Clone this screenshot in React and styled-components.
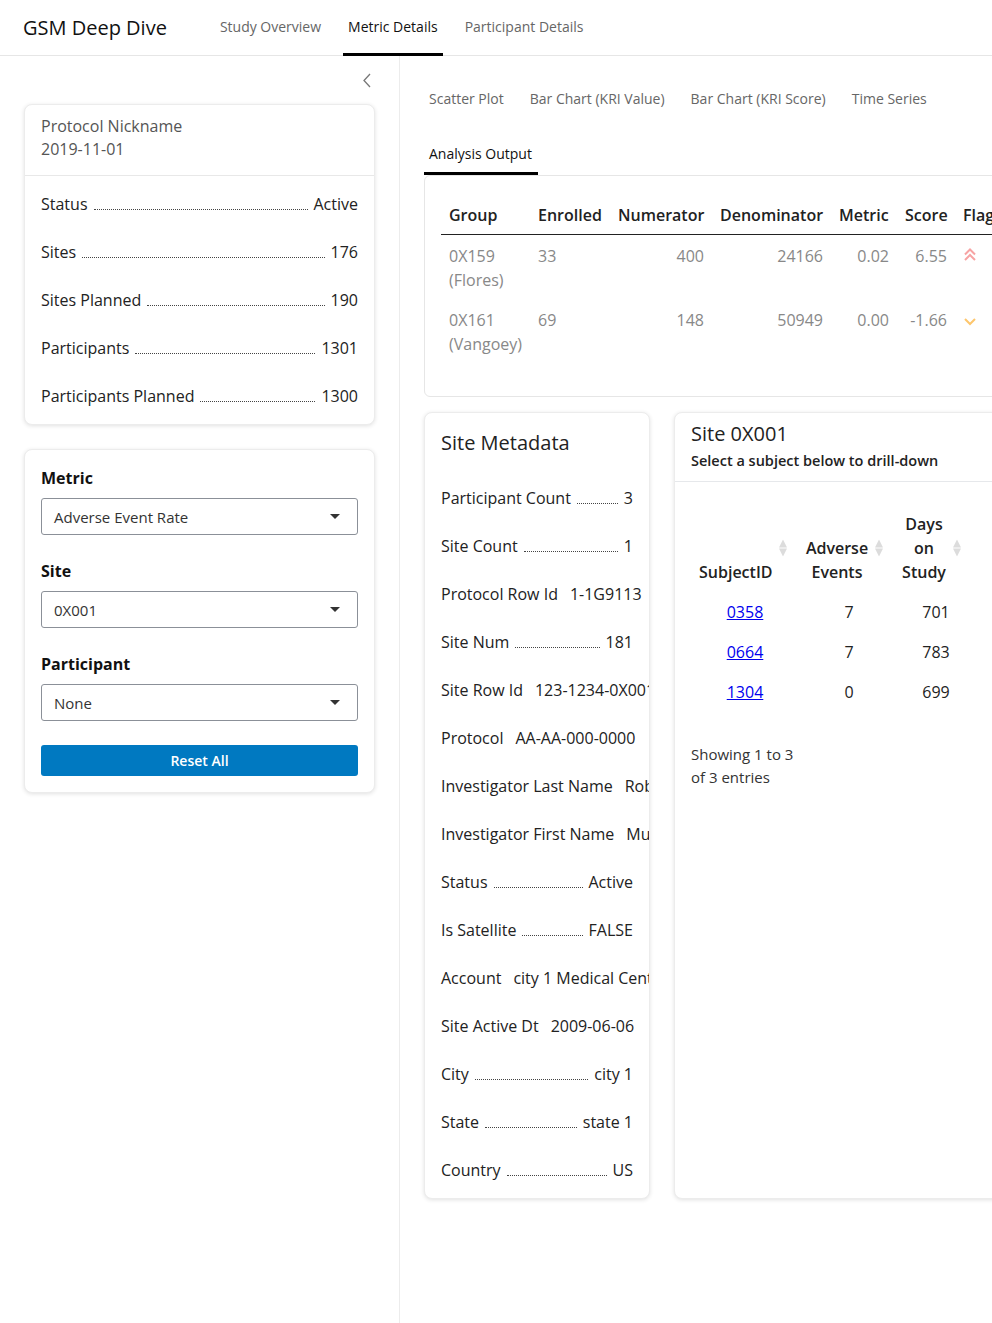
import React from 'react';
import styled, { createGlobalStyle } from 'styled-components';

const GlobalStyle = createGlobalStyle`
  html, body {
    margin: 0;
    padding: 0;
  }
  body {
    font-family: "Open Sans", "Noto Sans", sans-serif;
    color: #222;
    background: #fff;
    overflow-x: hidden;
  }
  * {
    box-sizing: border-box;
  }
`;

const studyRows = [
  ['Status', 'Active'],
  ['Sites', '176'],
  ['Sites Planned', '190'],
  ['Participants', '1301'],
  ['Participants Planned', '1300'],
];

const siteRows = [
  ['Participant Count', '3'],
  ['Site Count', '1'],
  ['Protocol Row Id', '1-1G9113'],
  ['Site Num', '181'],
  ['Site Row Id', '123-1234-0X001'],
  ['Protocol', 'AA-AA-000-0000'],
  ['Investigator Last Name', 'Roberts'],
  ['Investigator First Name', 'Muriel'],
  ['Status', 'Active'],
  ['Is Satellite', 'FALSE'],
  ['Account', 'city 1 Medical Center'],
  ['Site Active Dt', '2009-06-06'],
  ['City', 'city 1'],
  ['State', 'state 1'],
  ['Country', 'US'],
];

const analysisRows = [
  { group: '0X159 (Flores)', enrolled: 33, num: 400, den: 24166, metric: '0.02', score: '6.55', flag: 'up' },
  { group: '0X161 (Vangoey)', enrolled: 69, num: 148, den: 50949, metric: '0.00', score: '-1.66', flag: 'down' },
];

const subjects = [
  ['0358', 7, 701],
  ['0664', 7, 783],
  ['1304', 0, 699],
];

const FlagIcon = ({ dir }) =>
  dir === 'up' ? (
    <svg width="14" height="14" viewBox="0 0 14 14" fill="none" stroke="#f7a3a3" strokeWidth="2">
      <polyline points="2,6.5 7,1.5 12,6.5" />
      <polyline points="2,12 7,7 12,12" />
    </svg>
  ) : (
    <svg width="14" height="9" viewBox="0 0 14 9" fill="none" stroke="#fdc66d" strokeWidth="2">
      <polyline points="2,2 7,7 12,2" />
    </svg>
  );

const SortIcon = () => (
  <SortMark width="8" height="17" viewBox="0 0 8 17" fill="#dcdcdc">
    <polygon points="4,0 8,8 0,8" />
    <polygon points="0,9 8,9 4,17" />
  </SortMark>
);

const App = () => {
  return (
    <Page>
      <GlobalStyle />
      <Header>
        <Brand>GSM Deep Dive</Brand>
        <Nav>
          <NavTab>Study Overview</NavTab>
          <NavTab $active>Metric Details</NavTab>
          <NavTab>Participant Details</NavTab>
        </Nav>
      </Header>

      <Body>
        <Sidebar>
          <CollapseRow>
            <svg width="10" height="15" viewBox="0 0 10 15" fill="none" stroke="#777" strokeWidth="1.3">
              <polyline points="8,1 2,7.5 8,14" />
            </svg>
          </CollapseRow>

          <Card>
            <CardHead>
              <Muted>Protocol Nickname</Muted>
              <Muted>2019-11-01</Muted>
            </CardHead>
            <RowList>
              {studyRows.map(([label, value]) => (
                <LeaderRow key={label}>
                  <span>{label}</span>
                  <Leader />
                  <span>{value}</span>
                </LeaderRow>
              ))}
            </RowList>
          </Card>

          <Card>
            <FilterBody>
              <Field>
                <FieldLabel>Metric</FieldLabel>
                <SelectBox>
                  Adverse Event Rate
                  <Caret />
                </SelectBox>
              </Field>
              <Field>
                <FieldLabel>Site</FieldLabel>
                <SelectBox>
                  0X001
                  <Caret />
                </SelectBox>
              </Field>
              <Field>
                <FieldLabel>Participant</FieldLabel>
                <SelectBox>
                  None
                  <Caret />
                </SelectBox>
              </Field>
              <ResetButton>Reset All</ResetButton>
            </FilterBody>
          </Card>
        </Sidebar>

        <Main>
          <TabRow>
            <SubTab>Scatter Plot</SubTab>
            <SubTab>Bar Chart (KRI Value)</SubTab>
            <SubTab>Bar Chart (KRI Score)</SubTab>
            <SubTab>Time Series</SubTab>
          </TabRow>
          <TabRow $second>
            <SubTab $active>Analysis Output</SubTab>
          </TabRow>

          <OutputCard>
            <DataTable>
              <colgroup>
                <col style={{ width: 89 }} />
                <col style={{ width: 80 }} />
                <col style={{ width: 102 }} />
                <col style={{ width: 119 }} />
                <col style={{ width: 66 }} />
                <col style={{ width: 58 }} />
                <col style={{ width: 60 }} />
              </colgroup>
              <thead>
                <tr>
                  <HeadCell>Group</HeadCell>
                  <HeadCell>Enrolled</HeadCell>
                  <HeadCell>Numerator</HeadCell>
                  <HeadCell>Denominator</HeadCell>
                  <HeadCell>Metric</HeadCell>
                  <HeadCell>Score</HeadCell>
                  <HeadCell>Flag</HeadCell>
                </tr>
              </thead>
              <tbody>
                {analysisRows.map((r) => (
                  <tr key={r.group}>
                    <DataCell>{r.group}</DataCell>
                    <DataCell>{r.enrolled}</DataCell>
                    <DataCell $right>{r.num}</DataCell>
                    <DataCell $right>{r.den}</DataCell>
                    <DataCell $right>{r.metric}</DataCell>
                    <DataCell $right>{r.score}</DataCell>
                    <DataCell>
                      <FlagIcon dir={r.flag} />
                    </DataCell>
                  </tr>
                ))}
              </tbody>
            </DataTable>
          </OutputCard>

          <LowerGrid>
            <Card>
              <MetaBody>
                <CardTitle>Site Metadata</CardTitle>
                <RowList $flat>
                  {siteRows.map(([label, value]) => (
                    <LeaderRow key={label}>
                      <span>{label}</span>
                      <Leader />
                      <span>{value}</span>
                    </LeaderRow>
                  ))}
                </RowList>
              </MetaBody>
            </Card>

            <Card>
              <SiteHead>
                <CardTitle $tight>Site 0X001</CardTitle>
                <Subtitle>Select a subject below to drill-down</Subtitle>
              </SiteHead>
              <SiteBody>
                <SubjectTable>
                  <colgroup>
                    <col style={{ width: 100 }} />
                    <col style={{ width: 96 }} />
                    <col style={{ width: 78 }} />
                  </colgroup>
                  <thead>
                    <tr>
                      <SortHead>SubjectID<SortIcon /></SortHead>
                      <SortHead $shift>Adverse Events<SortIcon /></SortHead>
                      <SortHead $shift>Days on Study<SortIcon /></SortHead>
                    </tr>
                  </thead>
                  <tbody>
                    {subjects.map(([id, ae, days]) => (
                      <tr key={id}>
                        <SubjectCell>
                          <SubjectLink href="#">{id}</SubjectLink>
                        </SubjectCell>
                        <SubjectCell $shift>{ae}</SubjectCell>
                        <SubjectCell $shift>{days}</SubjectCell>
                      </tr>
                    ))}
                  </tbody>
                </SubjectTable>
                <TableInfo>Showing 1 to 3 of 3 entries</TableInfo>
              </SiteBody>
            </Card>
          </LowerGrid>
        </Main>
      </Body>
    </Page>
  );
};

const Page = styled.div`
  width: 100%;
  min-height: 100vh;
  display: flex;
  flex-direction: column;
  overflow: hidden;
`;

const Header = styled.header`
  height: 56px;
  display: flex;
  align-items: stretch;
  padding-left: 23px;
  border-bottom: 1px solid #e6e6e6;
`;

const Brand = styled.div`
  display: flex;
  align-items: center;
  font-size: 20px;
  color: #111;
  margin-right: 48px;
  padding-bottom: 1px;
`;

const Nav = styled.nav`
  display: flex;
  gap: 17px;
`;

const NavTab = styled.div`
  display: flex;
  align-items: center;
  padding: 0 5px;
  font-size: 14px;
  color: ${(p) => (p.$active ? '#111' : '#666')};
  border-bottom: 3px solid ${(p) => (p.$active ? '#000' : 'transparent')};
  margin-bottom: -1px;
`;

const Body = styled.div`
  flex: 1;
  display: flex;
`;

const Sidebar = styled.aside`
  width: 400px;
  flex-shrink: 0;
  padding: 12px 24px 24px;
  border-right: 1px solid #ececec;
  display: flex;
  flex-direction: column;
  gap: 24px;
`;

const CollapseRow = styled.div`
  height: 24px;
  display: flex;
  align-items: center;
  justify-content: flex-end;
  padding-right: 3px;
  margin-bottom: -12px;
`;

const Card = styled.div`
  background: #fff;
  border: 1px solid #ececec;
  border-radius: 8px;
  box-shadow: 0 1px 4px rgba(0, 0, 0, 0.12);
  overflow: hidden;
`;

const CardHead = styled.div`
  padding: 10px 16px 14px;
  border-bottom: 1px solid #e8e8e8;
  display: flex;
  flex-direction: column;
`;

const Muted = styled.span`
  font-size: 16px;
  line-height: 23px;
  color: #555;
`;

const RowList = styled.div`
  display: flex;
  flex-direction: column;
  gap: 24px;
  padding: ${(p) => (p.$flat ? '0' : '16px 16px')};
`;

const LeaderRow = styled.div`
  display: flex;
  align-items: baseline;
  font-size: 16px;
  line-height: 24px;
  color: #222;
  white-space: nowrap;

  & > span {
    flex-shrink: 0;
  }
`;

const Leader = styled.div`
  flex: 1 1 0;
  min-width: 0;
  margin: 0 6px;
  border-bottom: 1px dotted #444;
`;

const FilterBody = styled.div`
  padding: 16px 16px 16px;
  display: flex;
  flex-direction: column;
  gap: 24px;
`;

const Field = styled.div`
  display: flex;
  flex-direction: column;
  gap: 8px;
`;

const FieldLabel = styled.label`
  font-size: 16px;
  line-height: 24px;
  font-weight: 700;
  color: #111;
`;

const SelectBox = styled.div`
  height: 37px;
  border: 1px solid #8b9098;
  border-radius: 3px;
  display: flex;
  align-items: center;
  justify-content: space-between;
  padding: 0 17px 0 12px;
  font-size: 15px;
  color: #333;
`;

const Caret = styled.span`
  width: 0;
  height: 0;
  border-left: 5px solid transparent;
  border-right: 5px solid transparent;
  border-top: 5px solid #333;
`;

const ResetButton = styled.button`
  height: 31px;
  border: none;
  border-radius: 3px;
  background: #0079c1;
  color: #fff;
  font-family: inherit;
  font-size: 14px;
  font-weight: 600;
  cursor: pointer;
`;

const Main = styled.main`
  flex: 0 0 auto;
  width: 640px;
  padding: 24px 0 24px 24px;
`;

const TabRow = styled.div`
  display: flex;
  gap: 16px;
  height: ${(p) => (p.$second ? '41px' : '40px')};
  margin-top: ${(p) => (p.$second ? '14px' : '0')};
`;

const SubTab = styled.div`
  padding: ${(p) => (p.$active ? '10px 6px 8px 5px' : '9px 5px 11px')};
  font-size: 14px;
  line-height: 20px;
  color: ${(p) => (p.$active ? '#111' : '#666')};
  border-bottom: ${(p) => (p.$active ? '3px solid #000' : 'none')};
`;

const OutputCard = styled.div`
  border: 1px solid #e6e6e6;
  border-radius: 6px;
  padding: 19px 0 33px 16px;
  overflow: hidden;
`;

const DataTable = styled.table`
  table-layout: fixed;
  width: 574px;
  border-collapse: collapse;
`;

const HeadCell = styled.th`
  text-align: left;
  padding: 8px 8px 7px;
  font-size: 16px;
  line-height: 24px;
  font-weight: 600;
  color: #222;
  white-space: nowrap;
  border-bottom: 1px solid #222;
`;

const DataCell = styled.td`
  text-align: ${(p) => (p.$right ? 'right' : 'left')};
  vertical-align: top;
  padding: 9px 8px 7px;
  font-size: 16px;
  line-height: 24px;
  color: #888;

  svg {
    margin-top: 4px;
  }
`;

const LowerGrid = styled.div`
  display: grid;
  grid-template-columns: 226px 1fr;
  gap: 24px;
  margin-top: 15px;
  align-items: stretch;
`;

const MetaBody = styled.div`
  padding: 16px 16px 16px;
`;

const CardTitle = styled.div`
  font-size: 20px;
  line-height: ${(p) => (p.$tight ? '26px' : '28px')};
  color: #222;
  margin-bottom: ${(p) => (p.$tight ? '4px' : '29px')};
`;

const SiteHead = styled.div`
  padding: 8px 16px 10px;
  border-bottom: 1px solid #e6e8eb;
`;

const Subtitle = styled.div`
  font-size: 14.5px;
  line-height: 20px;
  font-weight: 600;
  color: #222;
`;

const SiteBody = styled.div`
  padding: 22px 16px 16px;
`;

const SubjectTable = styled.table`
  table-layout: fixed;
  width: 274px;
  border-collapse: collapse;
`;

const SortHead = styled.th`
  position: relative;
  text-align: center;
  vertical-align: bottom;
  padding: ${(p) => (p.$shift ? '8px 16px 8px 12px' : '8px 20px 8px 8px')};
  font-size: 16px;
  line-height: 24px;
  font-weight: 600;
  color: #222;
`;

const SortMark = styled.svg`
  position: absolute;
  right: 4px;
  top: 50%;
  transform: translateY(-50%);
`;

const SubjectCell = styled.td`
  text-align: center;
  padding: ${(p) => (p.$shift ? '8px 4px 8px 24px' : '8px 10px 8px 18px')};
  font-size: 16px;
  line-height: 24px;
  color: #222;
`;

const SubjectLink = styled.a`
  color: #0000ee;
  text-decoration: underline;
`;

const TableInfo = styled.div`
  margin-top: 31px;
  max-width: 112px;
  font-size: 15px;
  line-height: 23px;
  color: #333;
`;

export default App;
